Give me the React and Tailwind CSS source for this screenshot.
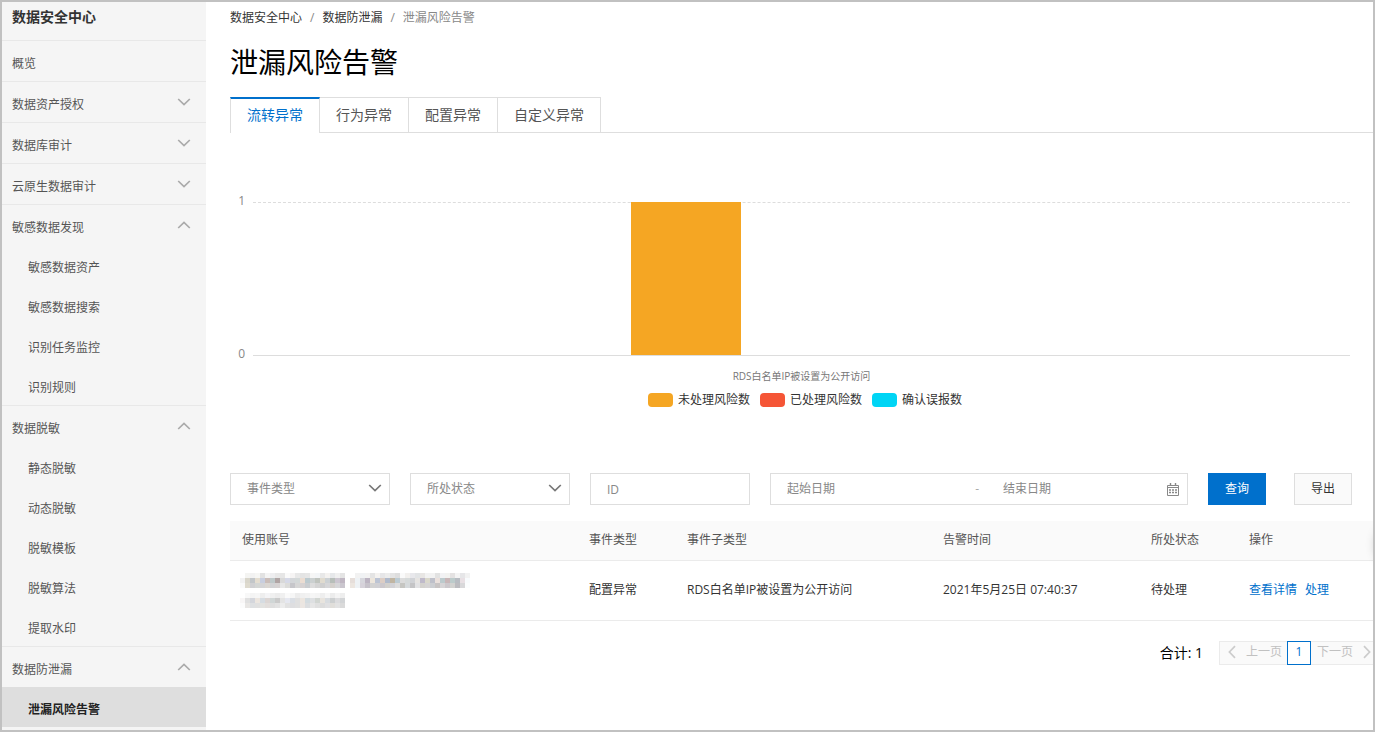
import React from 'react';

const CHILD = 'flex h-10 items-center pt-1.5 pl-[26px] text-xs';

const groups = [
  { label: '数据资产授权', open: false, items: [] },
  { label: '数据库审计', open: false, items: [] },
  { label: '云原生数据审计', open: false, items: [] },
  { label: '敏感数据发现', open: true, items: ['敏感数据资产', '敏感数据搜索', '识别任务监控', '识别规则'] },
  { label: '数据脱敏', open: true, items: ['静态脱敏', '动态脱敏', '脱敏模板', '脱敏算法', '提取水印'] },
  { label: '数据防泄漏', open: true, items: ['泄漏风险告警'] },
];

const tabs = ['流转异常', '行为异常', '配置异常', '自定义异常'];

const series = [
  { name: '未处理风险数', value: 1, color: 'bg-[#f5a623]' },
  { name: '已处理风险数', value: 0, color: 'bg-[#f55536]' },
  { name: '确认误报数', value: 0, color: 'bg-[#00d5f5]' },
];

function Chevron({ dir = 'down', className = '' }) {
  return (
    <svg className={className} width="14" height="8" viewBox="0 0 14 8" fill="none" stroke="currentColor" strokeWidth="1.7" aria-hidden="true">
      <path d={dir === 'down' ? 'M1.2 1l5.8 5.6L12.8 1' : 'M1.2 7L7 1.4 12.8 7'} />
    </svg>
  );
}

function SideChevron({ dir }) {
  return (
    <svg width="8" height="14" viewBox="0 0 8 14" fill="none" stroke="#cccccc" strokeWidth="1.7" aria-hidden="true">
      <path d={dir === 'left' ? 'M7 1.2L1.4 7 7 12.8' : 'M1 1.2L6.6 7 1 12.8'} />
    </svg>
  );
}

function CalendarIcon() {
  return (
    <svg width="12" height="13" viewBox="0 0 12 13" fill="none" stroke="#888888" aria-hidden="true">
      <path d="M0.5 2.5h11v10H0.5z" />
      <path d="M0 4.5h12" />
      <path d="M3.5 0v3M8.5 0v3" strokeWidth="1.4" />
      <path d="M2 7h2M5 7h2M8 7h2M2 9.5h2M5 9.5h2M8 9.5h2" strokeWidth="1.4" />
    </svg>
  );
}

function Sidebar() {
  return (
    <aside className="w-[204px] shrink-0 bg-[#f5f5f5] text-[#555555]">
      <h2 className="flex h-[38px] items-center pb-2 pl-[10px] text-sm font-bold text-[#333333]">数据安全中心</h2>
      <nav>
        <a href="#overview" className="flex h-[41px] items-center border-t border-[#e8e8e8] pt-1.5 pl-[10px] text-xs">概览</a>
        {groups.map((g) => (
          <div key={g.label} className="border-t border-[#e8e8e8]">
            <button type="button" aria-expanded={g.open} className="flex h-10 w-full items-center justify-between pr-[15px] pl-[10px] text-xs">
              <span className="pt-1.5">{g.label}</span>
              <Chevron dir={g.open ? 'up' : 'down'} className="text-[#aaaaaa]" />
            </button>
            {g.items.map((item) => (
              <a key={item} href="#item" className={item === '泄漏风险告警' ? CHILD + ' bg-[#dedede] font-bold text-[#222222]' : CHILD}>
                {item}
              </a>
            ))}
          </div>
        ))}
      </nav>
    </aside>
  );
}

function Chart() {
  return (
    <section className="pt-[69px] pr-[30px] text-xs text-[#888888]">
      <div className="flex">
        <div className="-mt-[9px] -mb-1.5 flex w-[23px] flex-col justify-between pr-2 text-right leading-4">
          <span>1</span>
          <span>0</span>
        </div>
        <div className="relative flex h-[154px] flex-1 items-end justify-center gap-[6px] border-b border-[#dddddd]">
          <div className="absolute inset-x-0 top-0 border-t border-dashed border-[#dddddd]" />
          {series.map((s) => (
            <div key={s.name} className={'relative w-1/10 ' + s.color} style={{ height: `${s.value * 100}%` }} />
          ))}
        </div>
      </div>
      <p className="mt-3 pl-[23px] text-center text-[10px] leading-4 text-[#777777]">RDS白名单IP被设置为公开访问</p>
    </section>
  );
}

function Legend() {
  return (
    <ul className="mt-2 flex justify-center gap-[10px] text-xs leading-4 text-[#333333]">
      {series.map((s) => (
        <li key={s.name} className="flex items-center gap-[5px]">
          <span className={'h-[14px] w-[25px] rounded-[4px] ' + s.color} />
          {s.name}
        </li>
      ))}
    </ul>
  );
}

const FIELD = 'h-8 border border-[#dedede] bg-white';

function Select({ label }) {
  return (
    <div className="relative w-40">
      <select aria-label={label} className={FIELD + ' w-full appearance-none px-4 text-xs text-[#888888]'}>
        <option>{label}</option>
      </select>
      <Chevron className="pointer-events-none absolute top-[11px] right-2 text-[#777777]" />
    </div>
  );
}

function Filters() {
  return (
    <form className="mt-[65px] flex gap-5 pr-7 text-xs">
      <Select label="事件类型" />
      <Select label="所处状态" />
      <input aria-label="ID" placeholder="ID" className={FIELD + ' w-40 px-4 placeholder:text-[#888888]'} />
      <div className={FIELD + ' flex min-w-0 flex-1 items-center pr-2'}>
        <input aria-label="起始日期" placeholder="起始日期" className="min-w-0 flex-1 px-4 placeholder:text-[#888888]" />
        <span className="px-2 text-[#aaaaaa]">-</span>
        <input aria-label="结束日期" placeholder="结束日期" className="w-[180px] px-4 placeholder:text-[#888888]" />
        <CalendarIcon />
      </div>
      <button type="button" className="h-8 w-[58px] bg-[#0070cc] text-white">查询</button>
      <button type="button" className="ml-2 h-8 w-[58px] border border-[#dedede] bg-[#fafafa] text-[#333333]">导出</button>
    </form>
  );
}

// Pixelated account names: each entry is a row of 5px cells, '' leaves a gap.
const e = '';
const mosaic = [
  [e, '#f4f4f2', '#f2f2f2', '#f6f6f4', '#e2e2e2', '#f4f4f4', '#eeeef0', '#e8e8e8', '#e6e6e6', '#fafafa', '#f6f4f4', '#e8e8e8', '#e4e4e4', '#e6e6e6', '#f6f6f6', '#f3f5f7', '#e8e8e8', '#f4f2f0', '#e6e8ea', '#f0f0f0', '#e4e4e4', e, e, '#f2f2f2', '#f0f2f4', '#f2f2f2', '#e4e4e4', '#f4f2f0', '#e6e6e8', '#ececec', '#e4e4e4', '#dedede', '#fafafa', '#f2f0ee', '#e8e8ec', '#e2e4e6', '#e8e6e4', '#f2f2f2', '#f2f2f2', '#e2e2e2', '#f2f2f4', '#f2f2f0', '#e4e2e2', '#f4f4f4', '#e6e6e8', '#f2f2f2', e],
  ['#f2f2f2', '#d9d6cb', '#c2c6c9', '#e4ddd0', '#c8cedf', '#cabdb9', '#bec8c9', '#b0a4a4', '#d9d9d9', '#d6d9e7', '#d3d6d9', '#d3d8d8', '#ebddd2', '#bccacf', '#cbd0d0', '#c0c4be', '#e0dbcf', '#ccd1d4', '#b7beb9', '#ccc6d0', '#bfb6c2', e, '#e6deda', '#eef2f5', '#d6d6dc', '#bcb4c2', '#ede6dc', '#bcc4d4', '#dccdc4', '#b0bacb', '#c0b5a2', '#bccbd3', '#dcdcdc', '#d6dada', '#d0d2d6', '#e6e4e2', '#bfbaca', '#dad8cb', '#bec0ca', '#eae0dc', '#bccacd', '#c8b6b8', '#bccbcb', '#b8bcc2', '#e8e0e4', '#f8fbfd', e],
  ['#fafafa', '#dedace', '#d0d0d2', '#d4d6d4', '#d4d4d6', '#dad6d2', '#d2d2d4', '#d6d2d2', '#e6e6e6', '#dcdcda', '#c6c6ca', '#d6d6d6', '#d6d2d2', '#cacdd0', '#dcdcdc', '#d4d4d4', '#cfcfcf', '#d6d6d8', '#d4d0cc', '#d6d6d8', '#cac6ce', e, '#ece6e0', '#eef2f5', '#d6d2da', '#c6c2ca', '#d2d2d2', '#d0d0d4', '#ccc8cc', '#d2d0cc', '#d2d2d6', '#dcdcdc', '#c6c6c2', '#d6dadc', '#c4c4c6', '#e2e2e4', '#d4d2ce', '#d6d4d4', '#ccced2', '#c8c4c4', '#d6d4d6', '#ccc8cc', '#d2d2d0', '#bcbcc0', '#d8d8da', '#fbfdfe', e],
  [],
  [e, '#f8f8f8', '#f4f4f4', '#f6f6f6', '#eeeeee', '#f4f4f6', '#f0f0f0', '#ececec', '#f0f0f0', '#fafafa', '#f6f6f6', '#ececec', '#f0f0f0', '#f2f2f2', '#f6f6f6', '#f4f4f4', '#eeeeee', '#f6f6f6', '#ececec', '#f4f4f4', '#eeeeee'],
  ['#f8f6f6', '#e0e0e0', '#d4d6dc', '#ece6e0', '#d6dce2', '#dcd6d4', '#d0d6d6', '#cacaca', '#e4e4e4', '#e6e8f0', '#dadee4', '#e0e0e0', '#ece6e0', '#d4dce0', '#dee0e2', '#d2d6d2', '#e8e4de', '#d8dce0', '#cccfd0', '#dcdcde', '#d2d4d6'],
  ['#fcfcfc', '#e8e6e4', '#dee0e2', '#e0e0e0', '#e2e2e0', '#e2dedc', '#dedede', '#e2e2e2', '#ececec', '#e2e2e2', '#dedee0', '#e0e0e0', '#ebe6e2', '#dcdee0', '#e6e6e6', '#e0e0e0', '#dcdcdc', '#e0e0e2', '#e0deda', '#e2e2e2', '#dadada'],
];

function MaskedAccount() {
  return (
    <svg width="230" height="35" viewBox="0 0 230 35" shapeRendering="crispEdges" aria-hidden="true">
      {mosaic.map((row, y) =>
        row.map((c, x) => (c ? <rect key={`${x}-${y}`} x={x * 5} y={y * 5} width="5" height="5" fill={c} /> : null)),
      )}
    </svg>
  );
}

function Alerts() {
  return (
    <table className="mt-4 w-full table-fixed text-left text-xs">
      <colgroup>
        <col />
        <col className="w-[98px]" />
        <col className="w-[256px]" />
        <col className="w-[208px]" />
        <col className="w-[98px]" />
        <col className="w-[143px]" />
      </colgroup>
      <thead>
        <tr className="h-[39px] border-b border-[#ebebeb] bg-[#fafafa] text-[#555555]">
          {['使用账号', '事件类型', '事件子类型', '告警时间', '所处状态', '操作'].map((h) => (
            <th key={h} className="px-3 font-normal">{h}</th>
          ))}
        </tr>
      </thead>
      <tbody>
        <tr className="h-[60px] border-b border-[#ebebeb] text-[#333333]">
          <td className="pl-[10px]"><MaskedAccount /></td>
          <td className="px-3">配置异常</td>
          <td className="px-3">RDS白名单IP被设置为公开访问</td>
          <td className="px-3">2021年5月25日 07:40:37</td>
          <td className="px-3">待处理</td>
          <td className="px-3 text-[#0070cc]">
            <a href="#detail" className="mr-2">查看详情</a>
            <a href="#handle">处理</a>
          </td>
        </tr>
      </tbody>
    </table>
  );
}

function Pagination() {
  return (
    <div className="mt-5 flex items-center justify-end">
      <span className="mr-4 text-sm text-black">合计: 1</span>
      <div className="flex h-6 text-xs text-[#c1c1c1]">
        <button type="button" disabled className="flex w-[68px] items-center gap-[10px] border border-r-0 border-[#ebebeb] bg-[#fafafa] pb-0.5 pl-2">
          <SideChevron dir="left" />上一页
        </button>
        <button type="button" className="w-6 border border-[#0070cc] bg-white pb-0.5 text-[#0070cc]">1</button>
        <button type="button" disabled className="flex w-[69px] items-center gap-[10px] border border-l-0 border-[#ebebeb] bg-[#fafafa] pb-0.5 pl-1.5">
          下一页<SideChevron dir="right" />
        </button>
      </div>
    </div>
  );
}

export default function App() {
  return (
    <div className="relative flex min-h-screen overflow-hidden border-2 border-[#c1c1c1] bg-white font-['Open_Sans','Noto_Sans_CJK_SC',sans-serif]">
      <Sidebar />
      <main className="min-w-0 flex-1 pl-6">
        <div className="-mr-[7px]">
          <nav aria-label="breadcrumb" className="flex gap-2 pt-2 text-xs text-[#333333]">
            <a href="#home">数据安全中心</a>
            <span className="text-[#888888]">/</span>
            <a href="#leak">数据防泄漏</a>
            <span className="text-[#888888]">/</span>
            <span className="text-[#888888]">泄漏风险告警</span>
          </nav>
          <h1 className="mt-[18px] text-[28px] leading-[36px] text-black">泄漏风险告警</h1>
          <div role="tablist" className="mt-[17px] flex text-sm text-[#555555]">
            {tabs.map((t, i) => (
              <button
                key={t}
                type="button"
                role="tab"
                aria-selected={i === 0}
                className={
                  i === 0
                    ? 'h-9 border-t-2 border-r border-l border-t-[#0070cc] border-r-[#dedede] border-l-[#dedede] px-4 pb-0.5 text-[#0070cc]'
                    : 'h-9 border-t border-r border-b border-[#dedede] px-4'
                }
              >
                {t}
              </button>
            ))}
            <div className="flex-1 border-b border-[#dedede]" />
          </div>
          <Chart />
          <Legend />
          <Filters />
          <Alerts />
          <Pagination />
        </div>
      </main>
      <div className="absolute top-[523px] -right-11 size-10 rounded-full bg-white shadow-[0_0_12px_rgba(0,0,0,0.3)]" />
    </div>
  );
}
